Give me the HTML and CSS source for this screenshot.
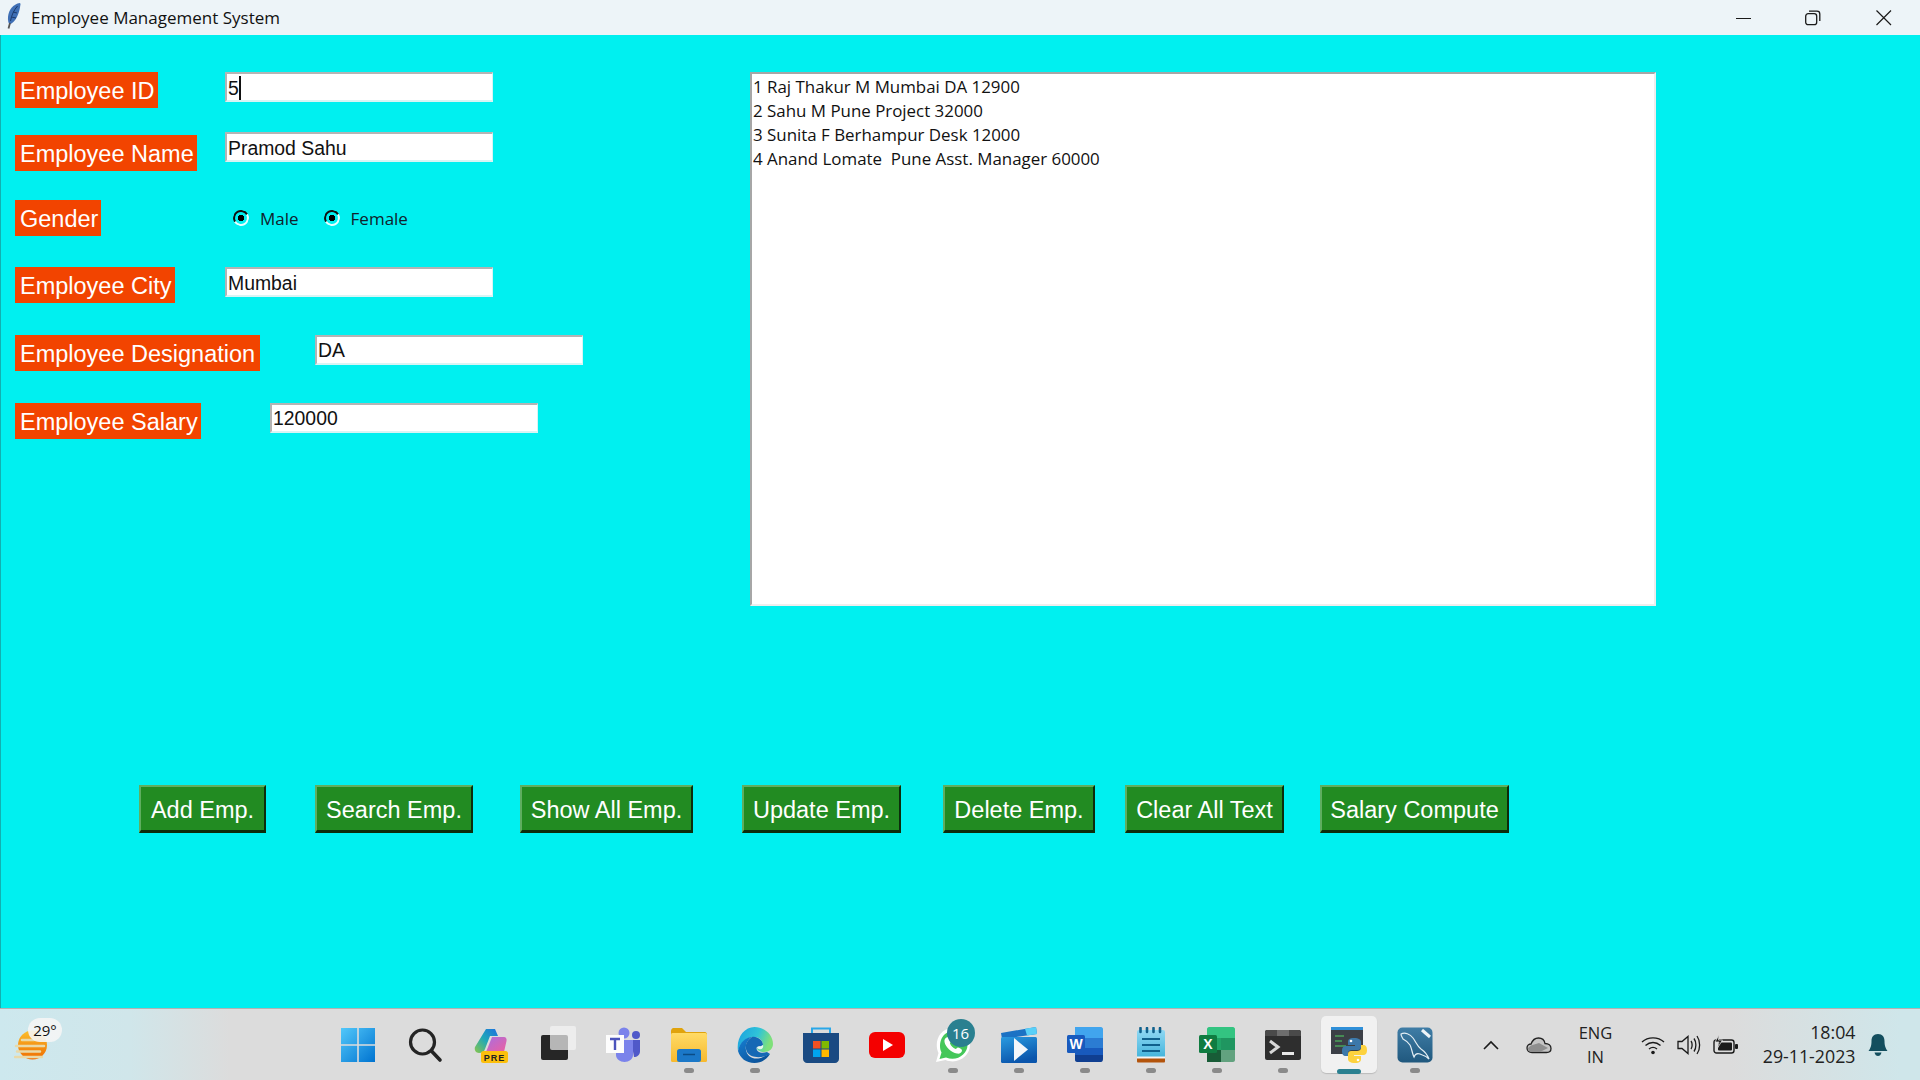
FILE: index.html
```html
<!DOCTYPE html>
<html lang="en">
<head>
    <meta charset="UTF-8">
    <title>Employee Management System</title>
    <link rel="stylesheet" href="styles.css">
</head>
<body>
    <div class="titlebar">
        <svg class="feather" width="14" height="26" viewBox="0 0 14 26">
            <path d="M13 0C6 1 1.500 7 1 14c-.2 3 .2 5.500 1.500 7.500C8 20 12.500 11 13.500 1z" fill="#3f6fb5"/>
            <path d="M10.500 3C7 7 4.500 12 3.500 18M6 9L10 10M4.500 14L9 15" stroke="#1d3a6b" stroke-width="1" fill="none"/>
            <path d="M3 20L1.500 25.500" stroke="#555" stroke-width="1.800"/>
        </svg>
        <span class="title">Employee Management System</span>
        <div class="win-controls">
            <svg width="16" height="16" viewBox="0 0 16 16"><path d="M0 8.500H15" stroke="#1a1a1a" stroke-width="1"/></svg>
            <svg width="16" height="16" viewBox="0 0 16 16"><rect x="0.700" y="3.700" width="11" height="11" rx="2.500" fill="none" stroke="#1a1a1a" stroke-width="1.300"/><path d="M4 1.200H12A2.800 2.800 0 0 1 14.800 4V11" fill="none" stroke="#1a1a1a" stroke-width="1.300"/></svg>
            <svg class="win-close" width="16" height="16" viewBox="0 0 16 16"><path d="M.5.500L15 15M15 .5L.5 15" stroke="#1a1a1a" stroke-width="1.200"/></svg>
        </div>
    </div>

    <main class="client">
        <div class="top">
            <div class="form">
                <div class="row">
                    <div class="label">Employee ID</div>
                    <div class="entry">5<span class="caret"></span></div>
                </div>
                <div class="row">
                    <div class="label label-low">Employee Name</div>
                    <div class="entry">Pramod Sahu</div>
                </div>
                <div class="row">
                    <div class="label">Gender</div>
                    <div class="radios">
                        <span class="radio"></span><span class="radio-text">Male</span>
                        <span class="radio radio-next"></span><span class="radio-text">Female</span>
                    </div>
                </div>
                <div class="row">
                    <div class="label">Employee City</div>
                    <div class="entry">Mumbai</div>
                </div>
                <div class="row row-wide">
                    <div class="label">Employee Designation</div>
                    <div class="entry">DA</div>
                </div>
                <div class="row row-mid">
                    <div class="label">Employee Salary</div>
                    <div class="entry">120000</div>
                </div>
            </div>
            <div class="listbox">
                <div class="list-line">1 Raj Thakur M Mumbai DA 12900</div>
                <div class="list-line">2 Sahu M Pune Project 32000</div>
                <div class="list-line">3 Sunita F Berhampur Desk 12000</div>
                <div class="list-line">4 Anand Lomate  Pune Asst. Manager 60000</div>
            </div>
        </div>

        <div class="buttons">
            <button class="btn btn-add">Add Emp.</button>
            <button class="btn btn-search">Search Emp.</button>
            <button class="btn btn-show">Show All Emp.</button>
            <button class="btn btn-update">Update Emp.</button>
            <button class="btn btn-delete">Delete Emp.</button>
            <button class="btn btn-clear">Clear All Text</button>
            <button class="btn btn-salary">Salary Compute</button>
        </div>
    </main>

    <footer class="taskbar">
        <div class="weather">
            <svg width="36" height="32" viewBox="0 0 36 32">
                <defs><linearGradient id="sun" x1="0" y1="0" x2="0" y2="1"><stop offset="0" stop-color="#fbc02d"/><stop offset="1" stop-color="#ef6c00"/></linearGradient></defs>
                <circle cx="18.500" cy="16" r="14.500" fill="url(#sun)"/>
                <path d="M8 11H20M2 17H30M3 22.500H26M1 28H28" stroke="#e9d9a8" stroke-width="2.500" stroke-linecap="round"/>
            </svg>
            <span class="temp">29°</span>
        </div>

        <div class="apps">
            <div class="app">
                <svg class="start" width="36" height="36" viewBox="0 0 36 36">
                    <defs><linearGradient id="win" x1="0" y1="0" x2="1" y2="1"><stop offset="0" stop-color="#52c8fa"/><stop offset="1" stop-color="#0073d0"/></linearGradient></defs>
                    <path d="M1 1H17.200V17.200H1zM18.800 1H35V17.200H18.800zM1 18.800H17.200V35H1zM18.800 18.800H35V35H18.800z" fill="url(#win)"/>
                </svg>
            </div>
            <div class="app">
                <svg width="36" height="36" viewBox="0 0 36 36">
                    <circle cx="15.500" cy="15" r="12" fill="none" stroke="#242424" stroke-width="3.200"/>
                    <path d="M24.500 24L33 33" stroke="#242424" stroke-width="3.600" stroke-linecap="round"/>
                </svg>
            </div>
            <div class="app">
                <svg width="36" height="36" viewBox="0 0 36 36">
                    <defs>
                        <linearGradient id="cop1" x1="0" y1="1" x2="1" y2="0"><stop offset="0" stop-color="#8ac64a"/><stop offset="0.500" stop-color="#1fa8b8"/><stop offset="1" stop-color="#1c6fe0"/></linearGradient>
                        <linearGradient id="cop2" x1="0" y1="0" x2="1" y2="1"><stop offset="0" stop-color="#a86fe0"/><stop offset="1" stop-color="#ee5f9f"/></linearGradient>
                    </defs>
                    <path d="M13 2H22L25 9H17L12 22C11 25 9 26 6 26C3 26 1 23 2 20z" fill="url(#cop1)"/>
                    <path d="M19 10H31C33 10 34 12 33.500 14L31 25H13z" fill="url(#cop2)"/>
                    <rect x="8" y="24" width="27" height="12" rx="2.500" fill="#fcbf0c"/>
                    <text x="21.500" y="33.500" class="pre">PRE</text>
                </svg>
            </div>
            <div class="app">
                <svg class="taskview" width="36" height="36" viewBox="0 0 36 36">
                    <rect x="1" y="9" width="27" height="25" rx="2" fill="#262626"/>
                    <rect x="10" y="0" width="26" height="24" rx="2" fill="#f4f4f4" fill-opacity="0.700"/>
                </svg>
            </div>
            <div class="app">
                <svg width="36" height="36" viewBox="0 0 36 36">
                    <circle cx="19" cy="6" r="5.500" fill="#7b83eb"/>
                    <circle cx="31" cy="8" r="4" fill="#5059c9"/>
                    <path d="M26 13H35V24C35 28 32 30 29 30z" fill="#5059c9"/>
                    <path d="M11 13H28V28C28 32 24 35 19.500 35C15 35 11 32 11 28z" fill="#7b83eb"/>
                    <rect x="1" y="8" width="18" height="18" fill="#fdfdfd"/>
                    <path d="M5 12H15M10 12V23" stroke="#4b53bc" stroke-width="2.400"/>
                </svg>
            </div>
            <div class="app dot">
                <svg width="36" height="36" viewBox="0 0 36 36">
                    <defs><linearGradient id="fold" x1="0" y1="0" x2="0" y2="1"><stop offset="0" stop-color="#ffdb66"/><stop offset="1" stop-color="#f7b92e"/></linearGradient></defs>
                    <path d="M0 4C0 2.500 1 1 2.500 1H11L15 5H34C35 5 36 6 36 7V10H0z" fill="#e0a30c"/>
                    <rect x="0" y="6" width="36" height="29" rx="1.500" fill="url(#fold)"/>
                    <rect x="6" y="22" width="24" height="13" rx="2.500" fill="#1b78c8"/>
                    <path d="M12 27.500H24" stroke="#0b4c85" stroke-width="1.500"/>
                </svg>
            </div>
            <div class="app dot">
                <svg width="36" height="36" viewBox="0 0 36 36">
                    <defs>
                        <linearGradient id="edge" x1="0" y1="0" x2="1" y2="0.300"><stop offset="0" stop-color="#1b9fe0"/><stop offset="0.600" stop-color="#2fc4d8"/><stop offset="1" stop-color="#7fe07a"/></linearGradient>
                        <linearGradient id="edge2" x1="0" y1="0" x2="0.800" y2="1"><stop offset="0" stop-color="#1680d4"/><stop offset="1" stop-color="#0a4f96"/></linearGradient>
                    </defs>
                    <path d="M17.500 0C28 0 36 8 36 17C36 22 32 25 27 25C23 25 20 23 20 21C21 19 24 20 26 18C26 13 22 10 17 10C9 10 4 15 1 24C-1 11 7 0 17.500 0z" fill="url(#edge)"/>
                    <path d="M1 24C3 15 9 10 15 10C10 13 8 18 9 23C10 30 18 34 26 30C28 29 30 28 33 27C29 33 24 36 17.500 36C9 36 3 31 1 24z" fill="url(#edge2)"/>
                    <path d="M15 10C20 9 26 13 26 18C24 20 20 18.500 19.500 21C19.500 25 24 27 30 25L33 27C27 31 14 32 10 25C7 19 10 13 15 10z" fill="#1568b5"/>
                    <path d="M20 21C21 18.500 24 20 26 18C27 21 24 24 20 21z" fill="#e8f4ee"/>
                </svg>
            </div>
            <div class="app">
                <svg width="36" height="36" viewBox="0 0 36 36">
                    <path d="M9 6V1.500H27V6" fill="none" stroke="#2aa7e8" stroke-width="2"/>
                    <path d="M0 6H36V32C36 34 34 36 32 36H4C2 36 0 34 0 32z" fill="#1a4a82"/>
                    <rect x="10" y="14" width="7.500" height="7.500" fill="#f25022"/>
                    <rect x="18.500" y="14" width="7.500" height="7.500" fill="#7fba00"/>
                    <rect x="10" y="22.500" width="7.500" height="7.500" fill="#00a4ef"/>
                    <rect x="18.500" y="22.500" width="7.500" height="7.500" fill="#ffb900"/>
                </svg>
            </div>
            <div class="app">
                <svg width="36" height="36" viewBox="0 0 36 36">
                    <rect x="0" y="5" width="36" height="26" rx="6" fill="#f40000"/>
                    <path d="M14 12L24 18L14 24z" fill="#fff"/>
                </svg>
            </div>
            <div class="app dot">
                <svg width="36" height="36" viewBox="0 0 36 36">
                    <path d="M1 35L3.500 26C-1 17 3 1 18.500 1C29 1 35 9 35 18C35 29 23 38 10.500 33z" fill="#fff"/>
                    <path d="M4.500 32L6.500 25.500C2.500 17 7 4 18.500 4C27 4 32.500 10.500 32.500 18C32.500 27 22 35 11 30.500z" fill="#45c75a"/>
                    <path d="M12.500 10C14 9.500 15 11 16 13.500C16.500 15 14.800 15.500 15 16.500C16 19 18 21 20.500 22C21.500 22 22 20.500 23 20.500C25 21 27 22 27 23.500C27 26 24 27 22 26.500C16 25.500 10.500 20 9.500 15C9 12.500 10.500 10.500 12.500 10z" fill="#fff"/>
                </svg>
                <span class="badge">16</span>
            </div>
            <div class="app dot">
                <svg width="36" height="36" viewBox="0 0 36 36">
                    <defs><linearGradient id="clip" x1="0" y1="0" x2="0.400" y2="1"><stop offset="0" stop-color="#2a9be0"/><stop offset="1" stop-color="#0a55ac"/></linearGradient></defs>
                    <path d="M0 6L35 0L36 7L1 12z" fill="#1b72c4"/>
                    <path d="M24 1.800L35 0L36 7L26 8.500z" fill="#58d0f8"/>
                    <rect x="0" y="10" width="36" height="26" rx="1.500" fill="url(#clip)"/>
                    <path d="M13 11L27 22.500L13 34z" fill="#f3f6fa"/>
                </svg>
            </div>
            <div class="app dot">
                <svg width="36" height="36" viewBox="0 0 36 36">
                    <path d="M8 0H34C35 0 36 1 36 2V11H8z" fill="#41a5ee"/>
                    <rect x="8" y="11" width="28" height="10" fill="#2b7cd3"/>
                    <rect x="8" y="21" width="28" height="7" fill="#185abd"/>
                    <path d="M8 28H36V32C36 34 35 35 34 35H10C9 35 8 34 8 33z" fill="#103f91"/>
                    <rect x="0" y="8" width="18" height="18" rx="1.500" fill="#185abd"/>
                    <text x="9" y="22" class="tile-text">W</text>
                </svg>
            </div>
            <div class="app dot">
                <svg width="36" height="36" viewBox="0 0 36 36">
                    <defs><linearGradient id="note" x1="0" y1="0" x2="0" y2="1"><stop offset="0" stop-color="#8fd8f3"/><stop offset="1" stop-color="#3fb2da"/></linearGradient></defs>
                    <rect x="4" y="3" width="28" height="29" rx="2" fill="url(#note)"/>
                    <path d="M4 31H32V34C32 35 31.500 35.500 31 35.500H5C4.500 35.500 4 35 4 34z" fill="#b3540c"/>
                    <path d="M4 29.500H32V31.500H4z" fill="#f4f4f4"/>
                    <path d="M7.500 1V5M14 1V5M20.500 1V5M27 1V5" stroke="#10618d" stroke-width="2.600" stroke-linecap="round"/>
                    <path d="M9 12H27M9 18H27M9 24H27" stroke="#10618d" stroke-width="2"/>
                </svg>
            </div>
            <div class="app dot">
                <svg width="36" height="36" viewBox="0 0 36 36">
                    <path d="M8 2C8 1 9 0 10 0H34C35 0 36 1 36 2V11H8z" fill="#33c481"/>
                    <rect x="8" y="11" width="14" height="12" fill="#21a366"/>
                    <rect x="22" y="11" width="14" height="12" fill="#1f9660"/>
                    <rect x="8" y="23" width="14" height="12" fill="#185c37"/>
                    <path d="M22 23H36V33C36 34 35 35 34 35H22z" fill="#107c41" fill-opacity="0.600"/>
                    <rect x="0" y="8" width="18" height="18" rx="1.500" fill="#107c41"/>
                    <text x="9" y="22" class="tile-text">X</text>
                </svg>
            </div>
            <div class="app dot">
                <svg width="36" height="36" viewBox="0 0 36 36">
                    <rect x="0" y="3" width="36" height="30" rx="2" fill="#2e2e2e"/>
                    <path d="M0 5C0 4 1 3 2 3H12V9H0z" fill="#4a4a4a"/>
                    <path d="M12 3H24V9H12z" fill="#6e6e6e"/>
                    <path d="M24 3H34C35 3 36 4 36 5V9H24z" fill="#4a4a4a"/>
                    <path d="M5 14L13 20L5 26" fill="none" stroke="#d8d8d8" stroke-width="3"/>
                    <path d="M17 26.500H29" stroke="#e8e8e8" stroke-width="3"/>
                </svg>
            </div>
            <div class="app active">
                <svg width="36" height="36" viewBox="0 0 36 36">
                    <rect x="0" y="0" width="32" height="27" fill="#3b3f46"/>
                    <rect x="0" y="0" width="32" height="3" fill="#2f8fd8"/>
                    <path d="M4 9H13M4 14H11M4 19H15" stroke="#4ba35a" stroke-width="1.400"/>
                    <path d="M23 11C18 11 17 13 17 15V18H24V19H15C12 19 11 21 11 24C11 27 12 29 15 29H17V26C17 24 19 23 21 23H27C28.500 23 30 22 30 20V15C30 13 28 11 23 11z" fill="#3c78aa"/>
                    <path d="M24 36C29 36 30 34 30 32V29H23V28H32C35 28 36 26 36 23C36 20 35 18 32 18H30V21C30 23 28 24 26 24H20C18.500 24 17 25 17 27V32C17 34 19 36 24 36z" fill="#fdd23e"/>
                    <circle cx="20" cy="14" r="1.300" fill="#fff"/>
                    <circle cx="27" cy="33" r="1.300" fill="#fff"/>
                </svg>
            </div>
            <div class="app dot">
                <svg width="36" height="36" viewBox="0 0 36 36">
                    <defs><linearGradient id="sql" x1="0" y1="0" x2="0" y2="1"><stop offset="0" stop-color="#3f7da6"/><stop offset="1" stop-color="#20587e"/></linearGradient></defs>
                    <rect x="0.500" y="0.500" width="35" height="35" rx="5" fill="url(#sql)"/>
                    <path d="M4 7C8 5 13 7 16 11C19 15 20 19 24 22C27 24 30 27 32 32C29 29 26 28 23 27C20 26 18 27 17 30C15 26 15 22 13 18C11 15 8 13 6 12C5 10 4 9 4 7z" fill="none" stroke="#e3eef4" stroke-width="1.200"/>
                    <path d="M25 3L33 10" stroke="#eef4f8" stroke-width="3"/>
                </svg>
            </div>
        </div>

        <div class="tray">
            <svg class="caret-up" width="16" height="10" viewBox="0 0 16 10"><path d="M1 9L8 2L15 9" fill="none" stroke="#1a1a1a" stroke-width="1.600"/></svg>
            <svg class="cloud" width="26" height="18" viewBox="0 0 26 18">
                <path d="M6 16.500C3 16.500 1 14.500 1 12C1 9.500 3 8 5 8C6.500 4 9.500 2 12.500 2C16 2 18.500 4.500 19 7.500C22.500 7.500 25 9.500 25 12.500C25 15 23 16.500 20.500 16.500z" fill="#c4c4c4" stroke="#222" stroke-width="1.300"/>
                <path d="M5 9.500L13 7L22 12L14 16H6C3 16 2 14 2 12z" fill="#8e8e8e"/>
            </svg>
            <div class="lang">ENG<br>IN</div>
            <svg class="wifi" width="24" height="20" viewBox="0 0 24 20">
                <path d="M1 7C7 1.500 17 1.500 23 7M4.500 10.500C9 6.500 15 6.500 19.500 10.500M8 14C10.500 12 13.500 12 16 14" fill="none" stroke="#1a1a1a" stroke-width="1.400"/>
                <circle cx="12" cy="17.500" r="1.800" fill="#1a1a1a"/>
            </svg>
            <svg class="speaker" width="24" height="22" viewBox="0 0 24 22">
                <path d="M1 7.500H5L11 2.500V19.500L5 14.500H1z" fill="none" stroke="#1a1a1a" stroke-width="1.300"/>
                <path d="M14 7C15.500 9 15.500 13 14 15M17 4.500C19.500 8 19.500 14 17 17.500M20 2C23.500 7 23.500 15 20 20" fill="none" stroke="#1a1a1a" stroke-width="1.300"/>
            </svg>
            <svg class="battery" width="25" height="20" viewBox="0 0 25 20">
                <rect x="1" y="5" width="20" height="13" rx="2.500" fill="none" stroke="#1a1a1a" stroke-width="1.400"/>
                <rect x="5" y="7.500" width="14" height="8" rx="1" fill="#1a1a1a"/>
                <path d="M6 0L2 7H6L4.500 13L9.500 5H5.500z" fill="#1a1a1a" stroke="#dcdcdc" stroke-width="0.800"/>
                <rect x="22" y="9" width="3" height="5" rx="1" fill="#1a1a1a"/>
            </svg>
            <div class="clock">18:04<br>29-11-2023</div>
            <svg class="bell" width="20" height="24" viewBox="0 0 20 24">
                <path d="M10 1C5.500 1 3.500 4 3.500 8C3.500 13 2.500 15 0.500 18H19.500C17.500 15 16.500 13 16.500 8C16.500 4 14.500 1 10 1z" fill="#134e5e"/>
                <path d="M6.500 19.500C7 22 8.500 23 10 23C11.500 23 13 22 13.500 19.500z" fill="#134e5e"/>
            </svg>
        </div>
    </footer>
</body>
</html>
```

FILE: styles.css
```css
body {
    margin: 0;
    width: 1920px;
    height: 1080px;
    overflow: hidden;
    background-color: #00f0f0;
    font-family: "Liberation Sans", Arial, sans-serif;
}
.titlebar {
    height: 35px;
    display: flex;
    align-items: center;
    background-color: #edf4f8;
    box-sizing: border-box;
    padding-left: 7px;
}
.feather {
    margin-top: -3px;
}
.title {
    margin-left: 10px;
    font-family: "Open Sans", sans-serif;
    font-size: 17px;
    color: #111;
}
.win-controls {
    margin-left: auto;
    display: flex;
    gap: 53px;
    padding-right: 28px;
}
.win-close {
    margin-left: 2.500px;
}
.client {
    height: 973px;
    box-sizing: border-box;
    padding: 37px 0 0 14px;
    border-left: 1px solid #12b0b0;
}
.top {
    display: flex;
}
.form {
    width: 735px;
    display: grid;
    grid-template-rows: 60px 68px 67px 68px 68px 36px;
}
.row {
    display: grid;
    grid-template-columns: 210px 268px;
    align-items: start;
}
.row-wide {
    grid-template-columns: 300px 268px;
}
.row-mid {
    grid-template-columns: 255px 268px;
}
.label {
    justify-self: start;
    height: 36px;
    line-height: 38px;
    padding: 0 3px 0 5px;
    background-color: #f24400;
    color: #fff;
    font-size: 23.5px;
}
.row-wide .label {
    padding-right: 5px;
}
.label-low {
    margin-top: 3px;
}
.entry {
    height: 30px;
    box-sizing: border-box;
    padding-left: 1px;
    line-height: 28px;
    background-color: #fff;
    border-top: 2px solid #b4b4b4;
    border-left: 2px solid #b4b4b4;
    border-right: 1px solid #d8f4f4;
    border-bottom: 2px solid #d8f4f4;
    color: #111;
    font-size: 19.4px;
}
.row-wide .entry, .row-mid .entry {
    line-height: 26px;
}
.caret {
    display: inline-block;
    width: 2px;
    height: 24px;
    vertical-align: -5px;
    background-color: #111;
}
.radios {
    display: flex;
    align-items: center;
    height: 36px;
    padding-left: 8px;
}
.radio {
    width: 16px;
    height: 16px;
    box-sizing: border-box;
    border: 2px solid #111;
    border-right-color: #e8ffff;
    border-bottom-color: #e8ffff;
    border-radius: 50%;
    background: radial-gradient(circle, #000 0 3px, #00f0f0 3.500px);
    transform: rotate(15deg);
}
.radio-next {
    margin-left: 25px;
}
.radio-text {
    margin-left: 11px;
    font-family: "Open Sans", sans-serif;
    font-size: 17px;
    color: #10222c;
}
.listbox {
    width: 906px;
    height: 534px;
    box-sizing: border-box;
    padding: 1px;
    background-color: #fff;
    border-top: 2px solid #a6a6a6;
    border-left: 2px solid #a6a6a6;
    border-right: 2px solid #eeeeee;
    border-bottom: 2px solid #eeeeee;
    font-family: "Open Sans", sans-serif;
    font-size: 16.900px;
    line-height: 24px;
    color: #111;
}
.list-line {
    white-space: pre;
}
.buttons {
    display: flex;
    margin: 179px 0 0 124px;
}
.btn {
    height: 48px;
    padding: 3px 0 0;
    box-sizing: border-box;
    background-color: #228b22;
    border-top: 2px solid #5fae5f;
    border-left: 2px solid #5fae5f;
    border-right: 2px solid #0c2c0c;
    border-bottom: 3px solid #0c2c0c;
    color: #fff;
    font-family: "Liberation Sans", Arial, sans-serif;
    font-size: 23.5px;
}
.btn-add { width: 127px; margin-right: 49px; }
.btn-search { width: 158px; margin-right: 47px; }
.btn-show { width: 173px; margin-right: 49px; }
.btn-update { width: 159px; margin-right: 42px; }
.btn-delete { width: 152px; margin-right: 30px; }
.btn-clear { width: 159px; margin-right: 36px; }
.btn-salary { width: 189px; }

.taskbar {
    height: 72px;
    box-sizing: border-box;
    display: flex;
    align-items: center;
    border-top: 1px solid #b2b2b2;
    background: linear-gradient(90deg, #cde8ee 0, #d0e6ea 130px, #dcdcdc 230px, #dcdcdc 1730px, #cfe6ea 1900px);
}
.weather {
    position: relative;
    width: 325.500px;
    height: 71px;
    flex: none;
}
.weather svg {
    position: absolute;
    left: 14px;
    top: 20px;
}
.temp {
    position: absolute;
    left: 28px;
    top: 9px;
    width: 34px;
    height: 24px;
    line-height: 24px;
    text-align: center;
    border-radius: 12px;
    background-color: rgba(245, 245, 245, 0.900);
    font-family: "Open Sans", sans-serif;
    font-size: 15px;
    color: #111;
}
.apps {
    display: flex;
    flex: none;
}
.app {
    position: relative;
    width: 66px;
    height: 71px;
    display: flex;
    align-items: center;
    justify-content: center;
}
.app svg {
    position: relative;
}
.app .start {
    margin-left: -2px;
}
.app .taskview {
    left: 1px;
    top: -1px;
}
.app .pre {
    font-family: "Liberation Sans", sans-serif;
    font-size: 9px;
    font-weight: bold;
    letter-spacing: 1px;
    text-anchor: middle;
    fill: #222;
}
.app .tile-text {
    font-family: "Liberation Sans", sans-serif;
    font-size: 14px;
    font-weight: bold;
    text-anchor: middle;
    fill: #fff;
}
.dot::after {
    content: "";
    position: absolute;
    left: 28px;
    bottom: 7px;
    width: 10px;
    height: 5px;
    border-radius: 3px;
    background-color: #8a8a8a;
}
.active::before {
    content: "";
    position: absolute;
    left: 5px;
    top: 7px;
    width: 56px;
    height: 57px;
    border-radius: 5px;
    background-color: #f1f1f1;
    box-shadow: 0 1px 1px #bbb;
}
.active::after {
    content: "";
    position: absolute;
    left: 21px;
    bottom: 6px;
    width: 24px;
    height: 5px;
    border-radius: 3px;
    background-color: #2a8090;
}
.badge {
    position: absolute;
    left: 27px;
    top: 10px;
    width: 28px;
    height: 28px;
    line-height: 28px;
    text-align: center;
    border-radius: 50%;
    background-color: #2a8090;
    color: #fff;
    font-family: "Open Sans", sans-serif;
    font-size: 15px;
}
.tray {
    display: flex;
    align-items: center;
    flex: 1;
}
.caret-up { margin-left: 35px; }
.cloud { margin-left: 27px; }
.lang {
    width: 44px;
    margin-left: 22px;
    text-align: center;
    font-family: "Open Sans", sans-serif;
    font-size: 16.500px;
    line-height: 24px;
    color: #222;
}
.wifi { margin-left: 23px; }
.speaker { margin-left: 12px; }
.battery { margin-left: 12px; }
.clock {
    width: 102px;
    margin: -2px 0 0 16px;
    text-align: right;
    font-family: "Open Sans", sans-serif;
    font-size: 17.800px;
    line-height: 24px;
    color: #222;
}
.bell { margin-left: 12px; }
```
